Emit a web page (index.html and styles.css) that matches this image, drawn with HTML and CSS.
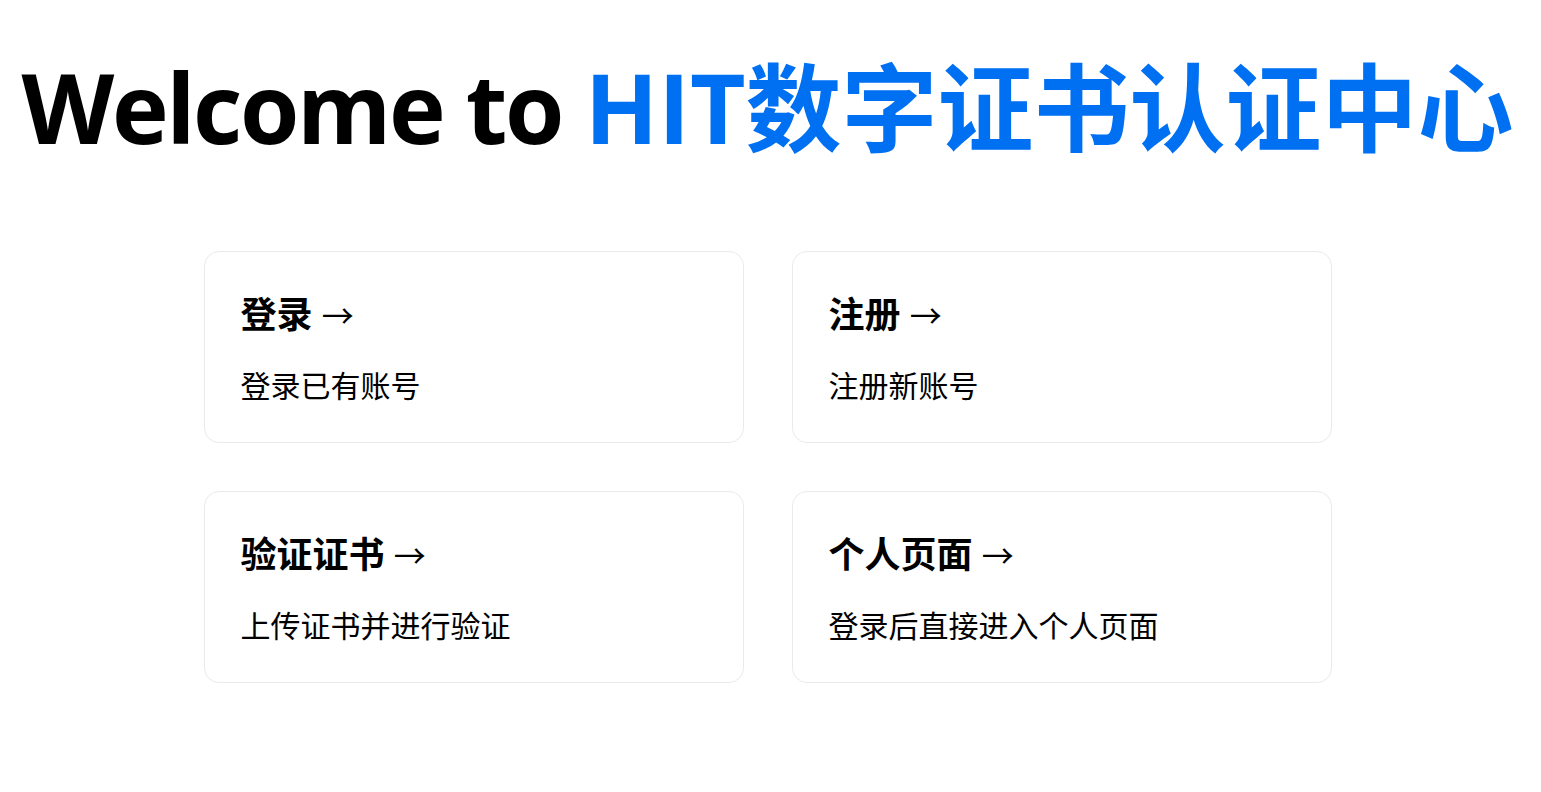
FILE: index.html
```html
<!DOCTYPE html>
<html lang="zh-CN">
<head>
<meta charset="utf-8">
<title>HIT数字证书认证中心</title>
<link rel="stylesheet" href="styles.css">
</head>
<body>
<div class="container">
  <main class="main">
    <h1 class="title"><span class="latin">Welcome to </span><a class="brand" href="#">HIT数字证书认证中心</a></h1>
    <div class="grid">
      <a class="card" href="#">
        <h2>登录 <span class="arrow">&rarr;</span></h2>
        <p>登录已有账号</p>
      </a>
      <a class="card" href="#">
        <h2>注册 <span class="arrow">&rarr;</span></h2>
        <p>注册新账号</p>
      </a>
      <a class="card" href="#">
        <h2>验证证书 <span class="arrow">&rarr;</span></h2>
        <p>上传证书并进行验证</p>
      </a>
      <a class="card" href="#">
        <h2>个人页面 <span class="arrow">&rarr;</span></h2>
        <p>登录后直接进入个人页面</p>
      </a>
    </div>
  </main>
</div>
</body>
</html>
```

FILE: styles.css
```css
html, body {
  margin: 0;
  padding: 0;
  background: #fff;
  color: #000;
  font-family: "Open Sans", "Noto Sans CJK SC", sans-serif;
}
* { box-sizing: border-box; }

.container {
  min-height: 100vh;
  padding-right: 6px;
  display: flex;
  flex-direction: column;
  align-items: center;
}

.main {
  padding-top: 52px;
  display: flex;
  flex-direction: column;
  align-items: center;
}

.title {
  margin: 0;
  font-size: 96px;
  line-height: 1.15;
  font-weight: 700;
  text-align: center;
  white-space: nowrap;
}

.title .latin {
  letter-spacing: -2.4px;
}

.brand {
  color: #0070f3;
  text-decoration: none;
}

.grid {
  margin-top: 65px;
  display: grid;
  grid-template-columns: 540px 540px;
  gap: 48px;
  padding: 24px 0;
}

.card {
  display: block;
  padding: 36px;
  border: 1px solid #eaeaea;
  border-radius: 15px;
  color: inherit;
  text-decoration: none;
  height: 192px;
}

.card h2 {
  margin: 0 0 20px;
  font-size: 36px;
  line-height: 54px;
  font-weight: 700;
}

.card .arrow {
  font-weight: 400;
  font-size: 32px;
}

.card p {
  margin: 0;
  font-size: 30px;
  line-height: 45px;
}
```
